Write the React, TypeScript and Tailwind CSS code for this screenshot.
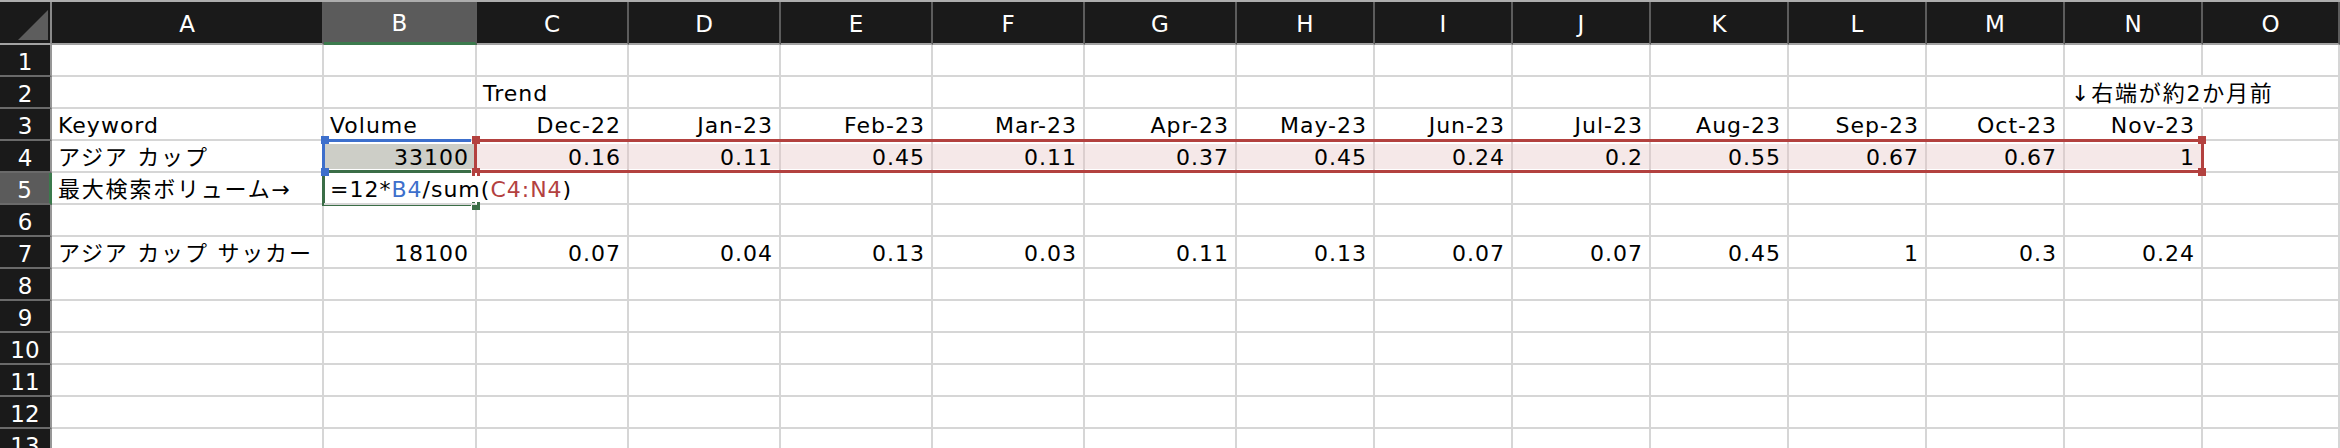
import React from 'react';

type Cell = { t?: React.ReactNode; r?: boolean; cls?: string };

const COLS = [
  { l: 'A', w: 'w-[272px]' },
  { l: 'B', w: 'w-[153px]' },
  { l: 'C', w: 'w-[152px]' },
  { l: 'D', w: 'w-[152px]' },
  { l: 'E', w: 'w-[152px]' },
  { l: 'F', w: 'w-[152px]' },
  { l: 'G', w: 'w-[152px]' },
  { l: 'H', w: 'w-[138px]' },
  { l: 'I', w: 'w-[138px]' },
  { l: 'J', w: 'w-[138px]' },
  { l: 'K', w: 'w-[138px]' },
  { l: 'L', w: 'w-[138px]' },
  { l: 'M', w: 'w-[138px]' },
  { l: 'N', w: 'w-[138px]' },
  { l: 'O', w: 'w-[137px]' },
];

const months = ['Dec-22', 'Jan-23', 'Feb-23', 'Mar-23', 'Apr-23', 'May-23', 'Jun-23', 'Jul-23', 'Aug-23', 'Sep-23', 'Oct-23', 'Nov-23'];
const trend1 = ['0.16', '0.11', '0.45', '0.11', '0.37', '0.45', '0.24', '0.2', '0.55', '0.67', '0.67', '1'];
const trend2 = ['0.07', '0.04', '0.13', '0.03', '0.11', '0.13', '0.07', '0.07', '0.45', '1', '0.3', '0.24'];

const inset = 'shadow-[inset_0_3px_0_#ffffff,inset_0_-2px_0_#ffffff]';
const pink = `bg-[#f5e8e8] border-r-[#dccfcf] ${inset}`;
const jp = 'tracking-[1.8px]';

const empty = (): Cell[] => COLS.map(() => ({}));

function buildRows(): Cell[][] {
  const rows: Cell[][] = [];
  for (let i = 0; i < 13; i++) rows.push(empty());
  rows[1][2] = { t: 'Trend' };
  rows[1][13] = { t: '↓右端が約2か月前', cls: `border-r-white ${jp}` };
  rows[2][0] = { t: 'Keyword' };
  rows[2][1] = { t: 'Volume' };
  months.forEach((m, i) => (rows[2][2 + i] = { t: m, r: true }));
  rows[3][0] = { t: 'アジア カップ', cls: jp };
  rows[3][1] = { t: '33100', r: true, cls: `bg-[#cdcec7] ${inset}` };
  trend1.forEach((v, i) => (rows[3][2 + i] = { t: v, r: true, cls: pink }));
  rows[4][0] = { t: '最大検索ボリューム→', cls: jp };
  rows[4][1] = {
    t: (
      <>
        =12*<span className="text-[#3d6fcc]">B4</span>/sum(<span className="text-[#b3413f]">C4:N4</span>)
      </>
    ),
    cls: 'border-r-white relative z-10',
  };
  rows[6][0] = { t: 'アジア カップ サッカー', cls: jp };
  rows[6][1] = { t: '18100', r: true };
  trend2.forEach((v, i) => (rows[6][2 + i] = { t: v, r: true }));
  return rows;
}

function Handle({ pos, color }: { pos: string; color: string }) {
  return <div className={`absolute w-[8px] h-[8px] ${pos} ${color}`} />;
}

export default function App() {
  const rows = buildRows();
  return (
    <div className="relative w-[2340px] h-[448px] overflow-hidden bg-white text-[22px] tracking-[1px] text-black font-['DejaVu_Sans','Noto_Sans_CJK_JP',sans-serif]">
      {/* column header */}
      <div className="flex h-[45px] border-t-2 border-[#adadad] bg-[#1a1a1a] text-[23px] tracking-normal">
        <div className="w-[52px] shrink-0 h-full flex items-end justify-end pr-[2px] pb-[3px] border-r-2 border-r-[#8a8a8a] border-b-2 border-b-[#a3a3a3]">
          <svg width="30" height="30" viewBox="0 0 30 30">
            <polygon points="0,30 30,30 30,0" fill="#5d5d5d" />
          </svg>
        </div>
        {COLS.map((c) => (
          <div
            key={c.l}
            className={`${c.w} shrink-0 h-full flex items-center justify-center pt-[3px] text-white border-r-2 border-r-[#5c5c5c] ${
              c.l === 'B' ? 'bg-[#5b5b5b] border-b-[3px] border-b-[#3c7a4d]' : 'border-b-2 border-b-[#a3a3a3]'
            }`}
          >
            {c.l}
          </div>
        ))}
      </div>
      {/* rows */}
      {rows.map((row, ri) => (
        <div key={ri} className="flex h-[32px]">
          <div
            className={`w-[52px] shrink-0 h-full flex items-end justify-center pb-[1px] text-white text-[23px] tracking-normal border-b-2 border-b-[#6a6a6a] ${
              ri === 4 ? 'bg-[#5b5b5b] border-r-[3px] border-r-[#3b7a4c]' : 'bg-[#1a1a1a] border-r-2 border-r-[#979797]'
            }`}
          >
            <span className="leading-[24px]">{ri + 1}</span>
          </div>
          {row.map((c, ci) => (
            <div
              key={ci}
              className={`${COLS[ci].w} shrink-0 h-full flex items-end whitespace-nowrap border-r-2 border-b-2 border-[#d6d6d6] pb-[1px] ${
                c.r ? 'justify-end pr-[6px]' : 'justify-start pl-[6px]'
              } ${c.cls ?? ''}`}
            >
              {c.t !== undefined && <span className="leading-[24px] shrink-0">{c.t}</span>}
            </div>
          ))}
        </div>
      ))}

      {/* range highlight B4 (blue) */}
      <div className="absolute left-[322px] top-[139px] w-[149px] h-[31px] border-t-[3px] border-l-[3px] border-[#3d6fcc]">
        <Handle pos="-left-[4px] -top-[6px]" color="bg-[#3d6fcc]" />
      </div>

      {/* range highlight C4:N4 (red) */}
      <div className="absolute left-[474px] top-[139px] w-[1730px] h-[34px] border-[3px] border-[#b3413f]">
        <Handle pos="-left-[5px] -top-[6px]" color="bg-[#b3413f]" />
        <Handle pos="-left-[5px] top-[26px]" color="bg-[#b3413f]" />
        <Handle pos="-right-[5px] -top-[6px]" color="bg-[#b3413f]" />
        <Handle pos="-right-[5px] top-[26px]" color="bg-[#b3413f]" />
      </div>

      {/* active cell B5 (green) */}
      <div className="absolute left-[322px] top-[170px] w-[149px] h-[36px] border-t-[3px] border-l-[3px] border-b-[3px] border-[#3b6e47]">
        <Handle pos="-right-[9px] top-[29px]" color="bg-[#3b6e47]" />
        <Handle pos="-left-[4px] -top-[5px]" color="bg-[#3d6fcc]" />
      </div>
    </div>
  );
}
